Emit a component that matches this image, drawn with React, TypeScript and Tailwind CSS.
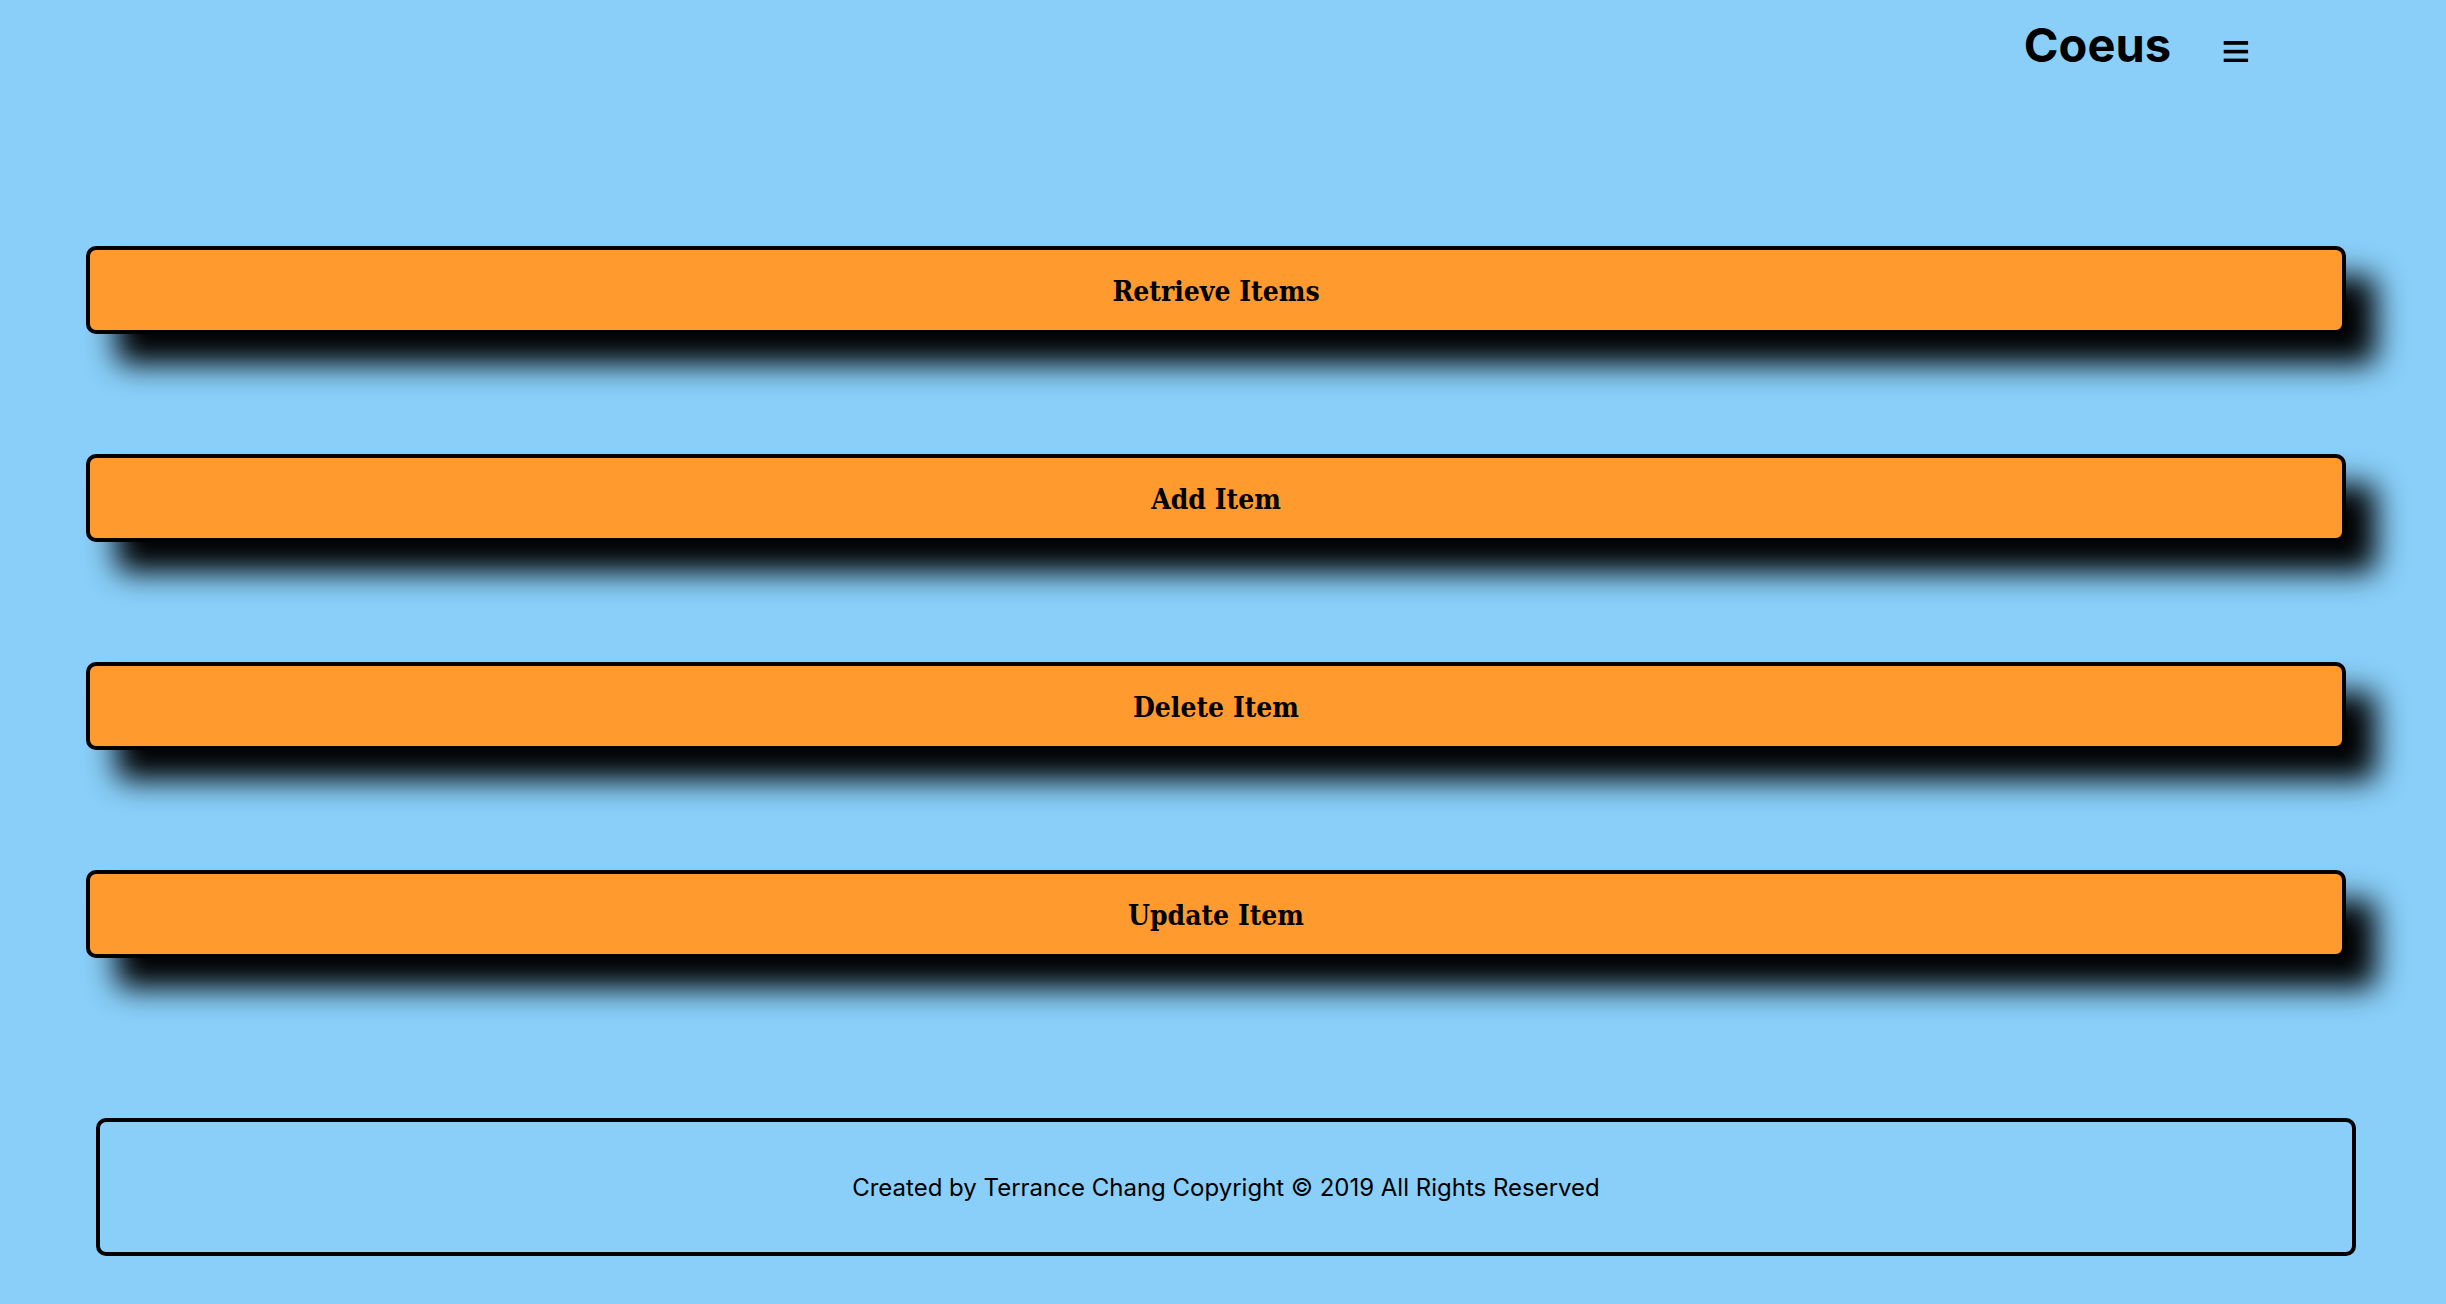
const actions = ['Retrieve Items', 'Add Item', 'Delete Item', 'Update Item'];

function Header() {
  return (
    <header className="flex h-[246px] items-start justify-end gap-[52px] pr-[197px] pt-4">
      <h1 className="font-['Inter',sans-serif] text-[47px] font-bold leading-[58px]">Coeus</h1>
      <button type="button" aria-label="Open menu" className="mt-[25px]">
        <svg width="26" height="21" viewBox="0 0 26 21" fill="currentColor" aria-hidden="true">
          <rect x="0.7" y="0" width="24.4" height="3.8" />
          <rect x="0.7" y="8.8" width="24.4" height="3.6" />
          <rect x="0.7" y="17.6" width="24.4" height="3.4" />
        </svg>
      </button>
    </header>
  );
}

export default function App() {
  return (
    <div className="min-h-screen bg-[#89cff9] text-black">
      <Header />
      <main className="flex flex-col gap-[120px] pl-[86px] pr-[100px]">
        {actions.map((label) => (
          <button
            key={label}
            type="button"
            className="h-[88px] w-full rounded-[10px] border-4 border-black bg-[#ff9a2e] pt-1 font-['DejaVu_Serif_Condensed','DejaVu_Serif',serif] text-[28px] font-bold leading-[40px] shadow-[30px_30px_30px_black]"
          >
            {label}
          </button>
        ))}
      </main>
      <footer className="mb-12 ml-24 mr-[90px] mt-40 flex h-[138px] items-center justify-center rounded-[10px] border-4 border-black pt-0.5">
        <p className="font-['Inter',sans-serif] text-[24px] leading-[30px]">
          Created by Terrance Chang Copyright © 2019 All Rights Reserved
        </p>
      </footer>
    </div>
  );
}
